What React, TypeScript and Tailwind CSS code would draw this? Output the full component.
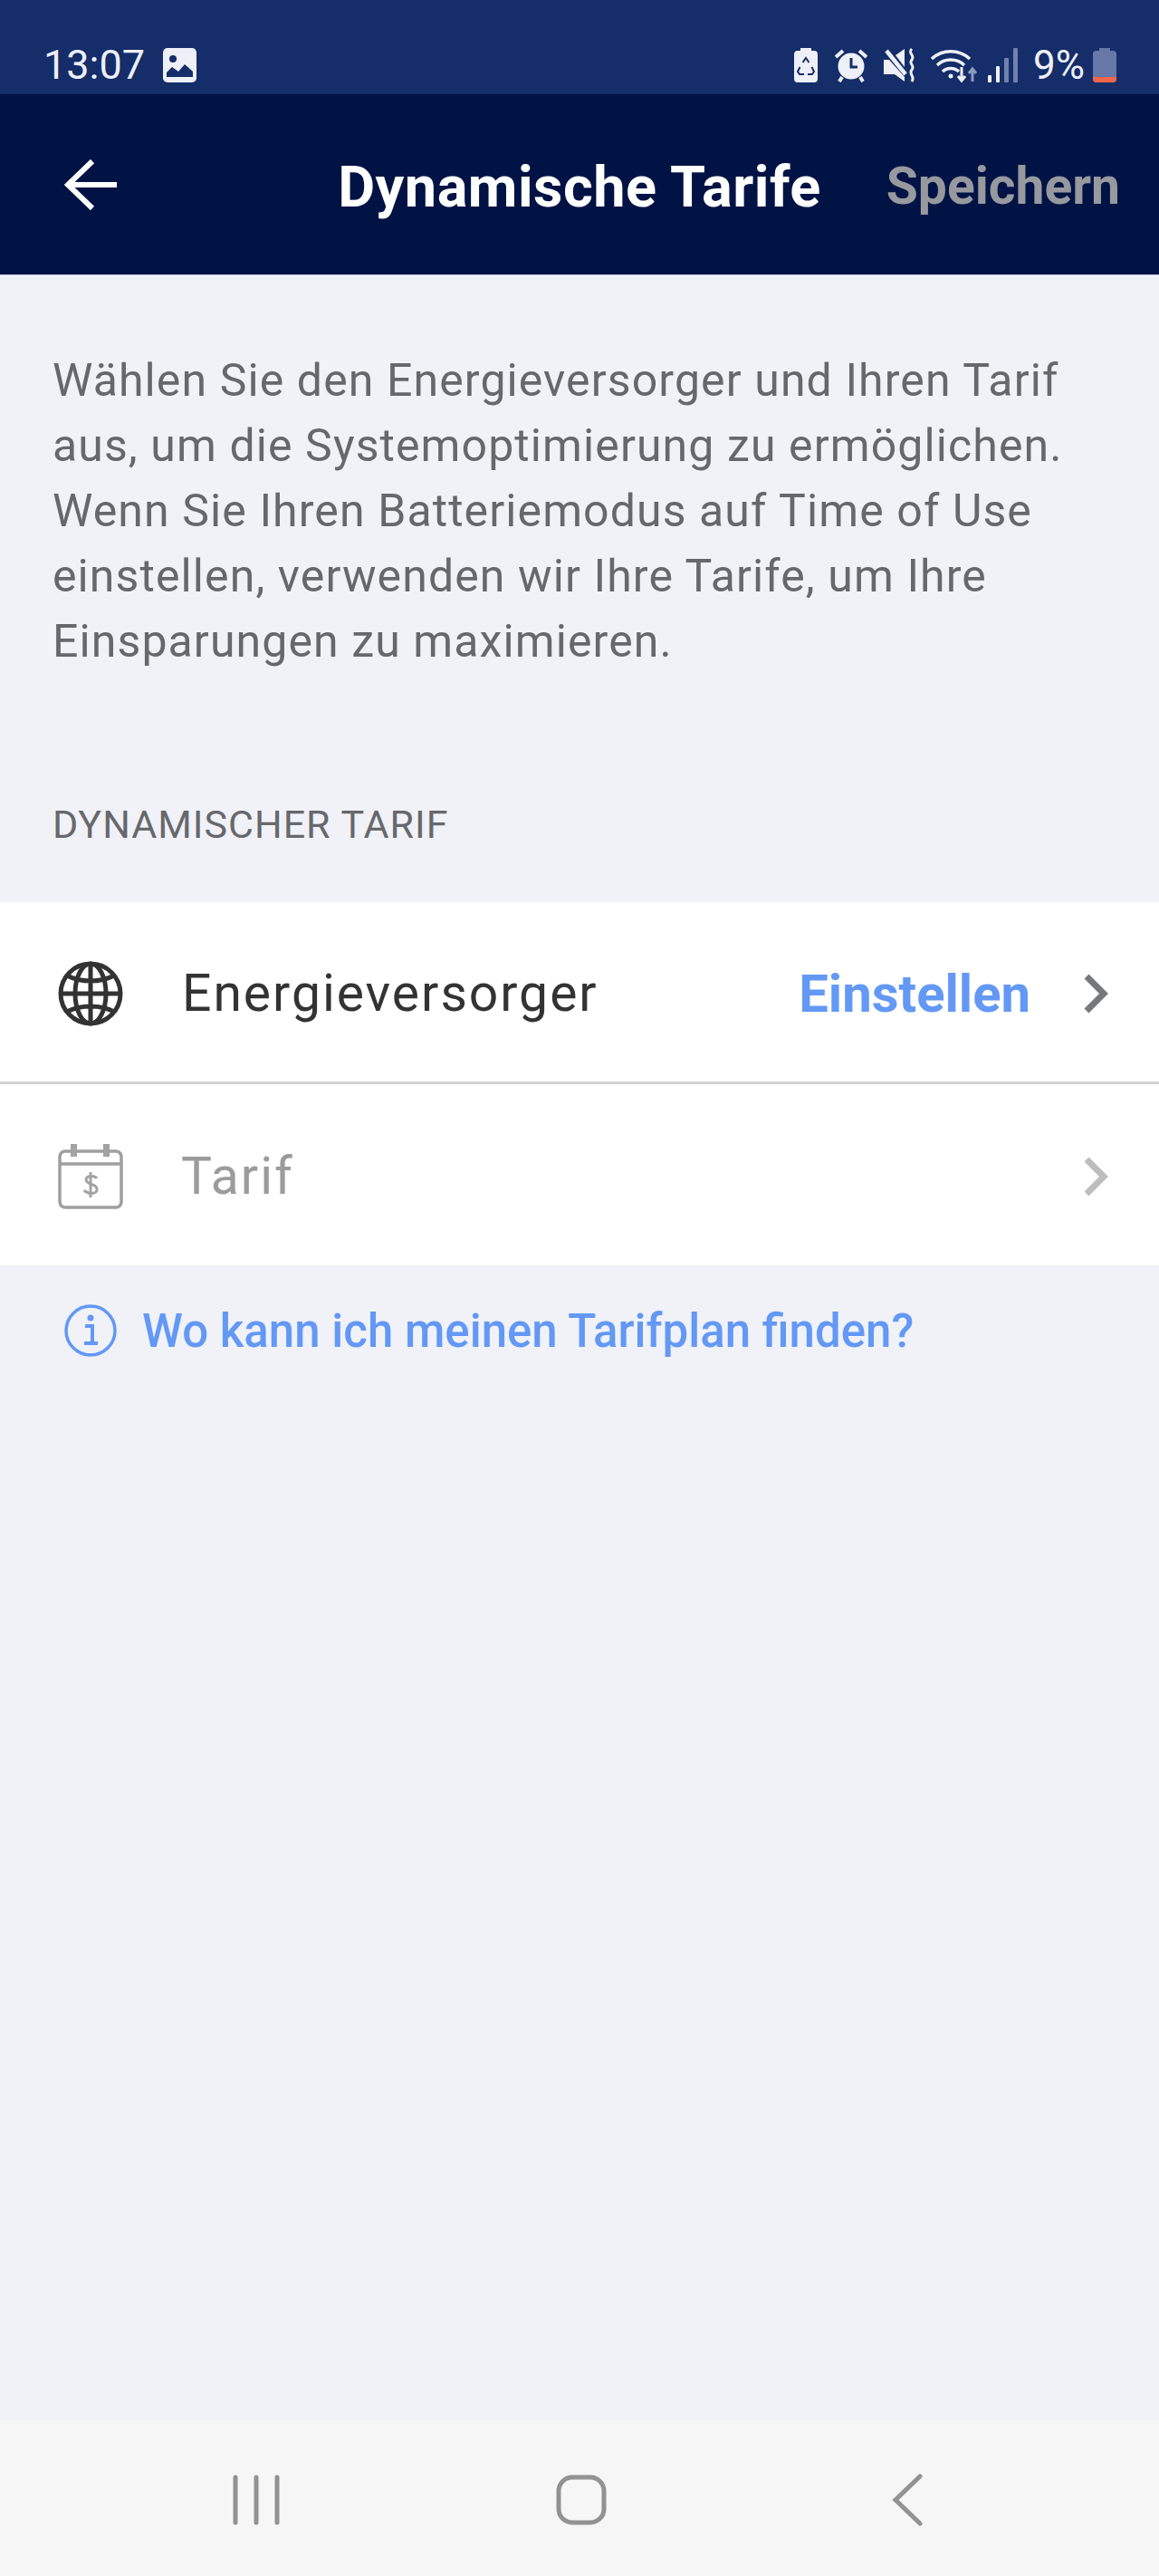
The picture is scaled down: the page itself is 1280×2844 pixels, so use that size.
import React from "react";

const Chevron = ({ color }: { color: string }) => (
  <svg width="28" height="44" viewBox="0 0 28 44" fill="none" className="shrink-0">
    <path d="M4 3 L23 22 L4 41" stroke={color} strokeWidth="7" />
  </svg>
);

const StatusIcons = () => (
  <div className="flex items-center">
    <svg width="26" height="38" viewBox="0 0 26 38" className="mr-[19px]">
      <path d="M7 0h12v3h3a4 4 0 0 1 4 4v27a4 4 0 0 1-4 4H4a4 4 0 0 1-4-4V7a4 4 0 0 1 4-4h3z" fill="#eef0f7" />
      <path d="M9.5 16l3.5-5 3.5 5M6.5 21l-2.5 5 2 3h5M19.5 21l2.5 5-2 3h-5" stroke="#152d69" strokeWidth="2" fill="none" />
    </svg>
    <svg width="36" height="38" viewBox="0 0 36 38" className="mr-[18px]">
      <circle cx="18" cy="20" r="14.5" fill="#eef0f7" />
      <path d="M18 11v10h7" stroke="#152d69" strokeWidth="3" fill="none" />
      <path d="M1 10l8-7M35 10l-8-7" stroke="#eef0f7" strokeWidth="4" />
      <path d="M8 32l-3 5M28 32l3 5" stroke="#eef0f7" strokeWidth="4" />
    </svg>
    <svg width="36" height="38" viewBox="0 0 36 38" className="mr-[16px]">
      <path d="M0 13h6l17 19v5l-11-8H0z" fill="#eef0f7" />
      <path d="M13 8l10-7v20z" fill="#eef0f7" />
      <path d="M3 3l21 26" stroke="#eef0f7" strokeWidth="4.5" />
      <path d="M31 1c-5 5 4 7 0 12s4 6 0 11 4 7 0 13" stroke="#eef0f7" strokeWidth="3" fill="none" />
    </svg>
    <svg width="52" height="40" viewBox="0 0 52 40" className="mr-[11px]">
      <path d="M1 13a31 31 0 0 1 42 0M7 20a22 22 0 0 1 30 0M13 27a13 13 0 0 1 18 0" stroke="#eef0f7" strokeWidth="3.5" fill="none" />
      <circle cx="22" cy="32" r="2.5" fill="#eef0f7" />
      <path d="M34 22v14M30 32l4 5 4-5" stroke="#eef0f7" strokeWidth="3" fill="none" />
      <path d="M46 38V24M42 29l4-5 4 5" stroke="#8d9cc2" strokeWidth="3" fill="none" />
    </svg>
    <svg width="33" height="38" viewBox="0 0 33 38" className="mr-[17px]">
      <rect x="0" y="30" width="4" height="8" rx="1" fill="#eef0f7" />
      <rect x="9" y="20" width="4" height="18" rx="1" fill="#eef0f7" />
      <rect x="18" y="11" width="5" height="27" rx="1" fill="#6f81ad" />
      <rect x="28" y="0" width="5" height="38" rx="1" fill="#6f81ad" />
    </svg>
    <span className="mr-[9px] text-[44px] leading-none text-[#eef0f7]">9%</span>
    <svg width="26" height="38" viewBox="0 0 26 38">
      <path d="M7 0h12v3h3a4 4 0 0 1 4 4v27a4 4 0 0 1-4 4H4a4 4 0 0 1-4-4V7a4 4 0 0 1 4-4h3z" fill="#6677a8" />
      <path d="M0 32h26v2a4 4 0 0 1-4 4H4a4 4 0 0 1-4-4z" fill="#f0674a" />
    </svg>
  </div>
);

const Row = ({ icon, labelClass, label, right, chevron, heightClass }: { icon: React.ReactNode; labelClass: string; label: string; right?: React.ReactNode; chevron: string; heightClass: string }) => (
  <div className={`flex items-center bg-white pl-[64px] pr-[56px] pt-[3px] ${heightClass}`}>
    {icon}
    <span className={labelClass}>{label}</span>
    <div className="flex-1" />
    {right}
    <Chevron color={chevron} />
  </div>
);

export default function App() {
  return (
    <div className="flex h-[2844px] w-[1280px] flex-col overflow-hidden bg-[#f0f2f8] font-['Roboto',sans-serif]">
      <div className="flex h-[104px] shrink-0 items-end justify-between bg-[#152d69] pb-[10px] pl-[48px] pr-[47px]">
        <div className="flex items-center">
          <span className="text-[45px] leading-none text-[#eef0f7]">13:07</span>
          <svg width="37" height="38" viewBox="0 0 37 38" className="ml-[20px]">
            <rect width="37" height="38" rx="5" fill="#eef0f7" />
            <circle cx="11" cy="12" r="4" fill="#152d69" />
            <path d="M4 32v-5l6-6 7 5 7-8 9 8v6z" fill="#152d69" />
          </svg>
        </div>
        <StatusIcons />
      </div>

      <div className="grid h-[199px] shrink-0 grid-cols-[1fr_auto_1fr] items-center bg-[#001344]">
        <div className="pl-[71px]">
          <svg width="58" height="56" viewBox="0 0 58 56" fill="none">
            <path d="M31 2L4 28l27 26M4 28h54" stroke="#ffffff" strokeWidth="6" />
          </svg>
        </div>
        <div className="pt-[5px] text-[63px] font-bold leading-none tracking-[0.5px] text-white">Dynamische Tarife</div>
        <div className="pr-[43px] pt-[3px] text-right text-[57px] font-bold leading-none text-[#97999f]">Speichern</div>
      </div>
      <div className="h-px shrink-0 bg-[#c7d2ee]" />

      <p className="ml-[58px] mt-[80px] w-[1200px] text-[50px] leading-[72px] tracking-[1.1px] text-[#67686c]">
        Wählen Sie den Energieversorger und Ihren Tarif
        <br />
        aus, um die Systemoptimierung zu ermöglichen.
        <br />
        Wenn Sie Ihren Batteriemodus auf Time of Use
        <br />
        einstellen, verwenden wir Ihre Tarife, um Ihre
        <br />
        Einsparungen zu maximieren.
      </p>

      <div className="ml-[58px] mt-[145px] text-[43px] leading-none tracking-[1px] text-[#67686c]">DYNAMISCHER TARIF</div>

      <div className="mt-[64px] flex flex-col">
        <Row
          heightClass="h-[198px]"
          label="Energieversorger"
          labelClass="ml-[65px] text-[57px] leading-none tracking-[2px] text-[#333333]"
          chevron="#77787b"
          right={<span className="mr-[58px] text-[58px] font-bold leading-none text-[#6398f5]">Einstellen</span>}
          icon={
            <svg width="72" height="72" viewBox="0 0 72 72" fill="none" stroke="#333333" strokeWidth="5" className="shrink-0">
              <circle cx="36" cy="36" r="33" />
              <ellipse cx="36" cy="36" rx="17" ry="33" />
              <path d="M36 3v66M3 36h66M10 16c15 8 37 8 52 0M10 56c15-8 37-8 52 0" />
            </svg>
          }
        />
        <div className="h-[3px] bg-[#d2d2d4]" />
        <Row
          heightClass="h-[200px]"
          label="Tarif"
          labelClass="ml-[64px] text-[57px] leading-none tracking-[2px] text-[#9b9b9b]"
          chevron="#bdbdbd"
          icon={
            <svg width="72" height="72" viewBox="0 0 72 72" fill="none" className="shrink-0">
              <rect x="2" y="8" width="68" height="62" rx="6" stroke="#9f9f9f" strokeWidth="3.5" />
              <path d="M2 22h68" stroke="#9f9f9f" strokeWidth="3.5" />
              <rect x="14" y="0" width="7" height="14" fill="#a3a3a3" />
              <rect x="50" y="0" width="7" height="14" fill="#a3a3a3" />
              <path d="M43 38c-2-3-11-4-12 1 0 7 13 4 12 12-1 5-11 4-14 0M36 31v28" stroke="#a3a3a3" strokeWidth="3" />
            </svg>
          }
        />
      </div>

      <div className="ml-[71px] mt-[43px] flex items-center">
        <svg width="58" height="58" viewBox="0 0 58 58" fill="none" className="shrink-0">
          <circle cx="29" cy="29" r="27" stroke="#6398f5" strokeWidth="3.5" />
          <circle cx="29" cy="15" r="3.5" fill="#6398f5" />
          <path d="M23 24h8v18M22 43h15" stroke="#6398f5" strokeWidth="4" />
        </svg>
        <span className="ml-[28px] text-[51px] font-medium leading-none text-[#6398f5]">Wo kann ich meinen Tarifplan finden?</span>
      </div>

      <div className="flex-1" />

      <div className="flex h-[173px] shrink-0 items-center bg-[#f6f6f6] pl-[257px] pt-[4px]">
        <svg width="52" height="56" viewBox="0 0 52 56" fill="none">
          <path d="M3 3v50M26 3v50M49 3v50" stroke="#929292" strokeWidth="5" strokeLinecap="round" />
        </svg>
        <svg width="56" height="56" viewBox="0 0 56 56" fill="none" className="ml-[305px]">
          <rect x="3" y="3" width="50" height="50" rx="15" stroke="#929292" strokeWidth="5" />
        </svg>
        <svg width="34" height="58" viewBox="0 0 34 58" fill="none" className="ml-[315px]">
          <path d="M31 3L4 29l27 26" stroke="#929292" strokeWidth="5" strokeLinecap="round" />
        </svg>
      </div>
    </div>
  );
}
